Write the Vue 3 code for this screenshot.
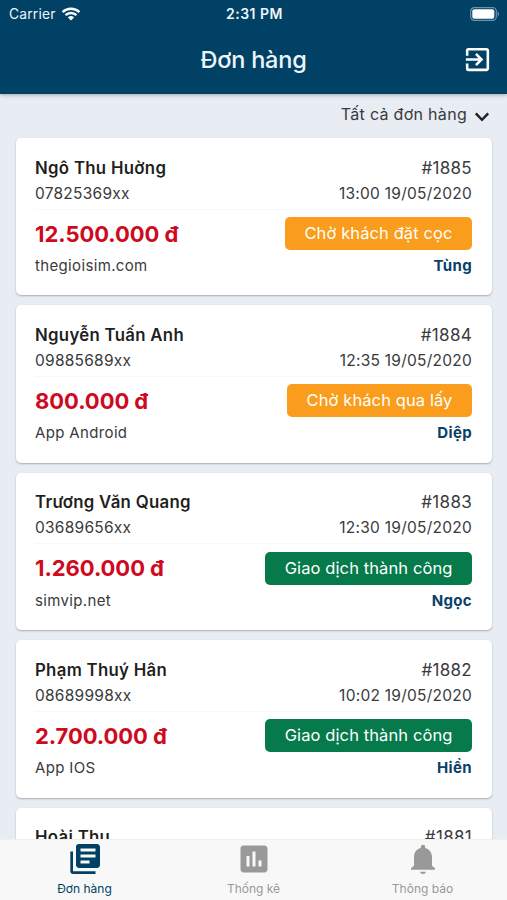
<template>
  <div class="screen">
    <header>
      <div class="status">
        <div class="carrier">
          <span>Carrier</span>
          <svg width="20" height="14" viewBox="0 0 20 14">
            <path d="M1.6 5.2a12 12 0 0 1 16.8 0" />
            <path d="M4.5 8.200a8 8 0 0 1 11 0" />
            <path class="dot" d="M10 13.6 6.900 10.5a4.6 4.6 0 0 1 6.2 0z" />
          </svg>
        </div>
        <span class="time">2:31 PM</span>
        <div class="battery">
          <svg width="30" height="14" viewBox="0 0 30 14">
            <rect class="shell" x="0.7" y="0.7" width="25.6" height="12.6" rx="3.6" />
            <rect class="level" x="2.3" y="2.3" width="22" height="9.4" rx="2" />
            <path class="tip" d="M27.6 4.6c1.8.6 1.8 4.2 0 4.8z" />
          </svg>
        </div>
      </div>
      <div class="title">
        <h1>Đơn hàng</h1>
        <svg class="exit" width="31" height="31" viewBox="0 0 24 24" @click="logout">
          <path
            d="M10.09 15.59 11.5 17l5-5-5-5-1.41 1.41L12.67 11H3v2h9.67l-2.58 2.59zM19 3H5a2 2 0 0 0-2 2v4h2V5h14v14H5v-4H3v4a2 2 0 0 0 2 2h14c1.1 0 2-.9 2-2V5c0-1.1-.9-2-2-2z"
          />
        </svg>
      </div>
    </header>

    <main>
      <div class="filter">
        <span>Tất cả đơn hàng</span>
        <svg width="16" height="12" viewBox="0 0 16 12">
          <path d="M1.8 2.4 8 8.8l6.2-6.4" />
        </svg>
      </div>

      <div class="card" v-for="order in orders" :key="order.id">
        <div class="row first">
          <b class="name">{{ order.name }}</b>
          <span class="id">#{{ order.id }}</span>
        </div>
        <template v-if="order.phone">
          <div class="row second">
            <span class="phone">{{ order.phone }}</span>
            <span class="date">{{ order.date }}</span>
          </div>
          <div class="row third">
            <b class="price">{{ order.price }} đ</b>
            <span class="badge" :class="order.type">{{ order.status }}</span>
          </div>
          <div class="row fourth">
            <span class="source">{{ order.source }}</span>
            <b class="staff">{{ order.staff }}</b>
          </div>
        </template>
      </div>
    </main>

    <nav>
      <a
        v-for="tab in tabs"
        :key="tab.label"
        :class="{ active: current === tab.label }"
        @click="current = tab.label"
      >
        <svg width="36" height="36" viewBox="0 0 24 24"><path :d="tab.icon" /></svg>
        <span>{{ tab.label }}</span>
      </a>
    </nav>
  </div>
</template>

<script setup>
import { ref } from "vue";

const current = ref("Đơn hàng");

const orders = ref([
  {
    id: 1885,
    name: "Ngô Thu Huờng",
    phone: "07825369xx",
    date: "13:00 19/05/2020",
    price: "12.500.000",
    status: "Chờ khách đặt cọc",
    type: "waiting",
    source: "thegioisim.com",
    staff: "Tùng",
  },
  {
    id: 1884,
    name: "Nguyễn Tuấn Anh",
    phone: "09885689xx",
    date: "12:35 19/05/2020",
    price: "800.000",
    status: "Chờ khách qua lấy",
    type: "waiting",
    source: "App Android",
    staff: "Diệp",
  },
  {
    id: 1883,
    name: "Trương Văn Quang",
    phone: "03689656xx",
    date: "12:30 19/05/2020",
    price: "1.260.000",
    status: "Giao dịch thành công",
    type: "success",
    source: "simvip.net",
    staff: "Ngọc",
  },
  {
    id: 1882,
    name: "Phạm Thuý Hân",
    phone: "08689998xx",
    date: "10:02 19/05/2020",
    price: "2.700.000",
    status: "Giao dịch thành công",
    type: "success",
    source: "App IOS",
    staff: "Hiền",
  },
  { id: 1881, name: "Hoài Thu" },
]);

const tabs = [
  {
    label: "Đơn hàng",
    icon: "M4 7H2.200v13.2c0 1.100.8 1.8 1.8 1.8h15v-1.800H4zM20 2H8a2 2 0 0 0-2 2v12c0 1.100.9 2 2 2h12c1.100 0 2-.9 2-2V4c0-1.100-.9-2-2-2zm-1 9H9V9h10v2zm-4 4H9v-2h6v2zm4-8H9V5h10v2z",
  },
  {
    label: "Thống kê",
    icon: "M19 3H5a2 2 0 0 0-2 2v14c0 1.100.9 2 2 2h14c1.100 0 2-.9 2-2V5c0-1.100-.9-2-2-2zM9 17H7v-7h2v7zm4 0h-2V7h2v10zm4 0h-2v-4h2v4z",
  },
  {
    label: "Thông báo",
    icon: "M12 22c1.100 0 2-.7 2-1.500h-4c0 .8.9 1.500 2 1.500zm6-5.500V11c0-3.300-1.700-5.600-4.500-6.300V4a1.500 1.500 0 0 0-3 0v.7C7.600 5.400 6 7.700 6 11v5.500l-2 1.700v.9h16v-.9z",
  },
];

function logout() {
  orders.value = [];
}
</script>

<style>
body {
  margin: 0;
  background: #e8edf4;
}
</style>

<style scoped>
* {
  box-sizing: border-box;
}

.screen {
  height: 900px;
  display: flex;
  flex-direction: column;
  overflow: hidden;
  font-family: Inter, "Noto Sans", sans-serif;
  color: #3a3a3c;
}

header {
  height: 94px;
  flex: none;
  background: #004165;
  color: #eef5fa;
  box-shadow: 0 1px 4px rgba(0, 0, 0, 0.3);
  z-index: 1;
}

.status {
  height: 27px;
  padding: 0 7px 0 9px;
  display: grid;
  grid-template-columns: 1fr auto 1fr;
  align-items: center;
  font-size: 14px;
}

.carrier {
  display: flex;
  align-items: center;
  gap: 5px;
  font-size: 13.8px;
  letter-spacing: 0.2px;
}

.carrier path {
  fill: none;
  stroke: #fff;
  stroke-width: 2.4;
}

.carrier .dot {
  fill: #fff;
  stroke: none;
}

.time {
  font-weight: 600;
  letter-spacing: 0.5px;
}

.battery {
  display: flex;
  justify-content: flex-end;
}

.shell {
  fill: none;
  stroke: #6f93aa;
  stroke-width: 1.2;
}

.level {
  fill: #fff;
}

.tip {
  fill: #6f93aa;
}

.title {
  height: 65px;
  padding: 0 14px;
  display: grid;
  grid-template-columns: 1fr auto 1fr;
  align-items: center;
}

h1 {
  grid-column: 2;
  margin: 0;
  font-size: 23.5px;
  font-weight: 500;
  letter-spacing: -0.2px;
}

.exit {
  justify-self: end;
  fill: #fff;
}

main {
  flex: 1;
  min-height: 0;
  padding: 0 15px 0 16px;
  overflow: hidden;
}

.filter {
  height: 44px;
  padding: 0 2px 4px 0;
  display: flex;
  align-items: center;
  justify-content: flex-end;
  gap: 7px;
  font-size: 16px;
  letter-spacing: 0.3px;
}

.filter svg {
  margin-top: 6px;
  fill: none;
  stroke: #1f2328;
  stroke-width: 2.5;
}

.card {
  height: 157.4px;
  margin-bottom: 10px;
  padding: 16.5px 20px 0 19px;
  background: #fff;
  border-radius: 5px;
  box-shadow: 0 1px 2px rgba(0, 0, 0, 0.28);
}

.row {
  display: flex;
  align-items: center;
  justify-content: space-between;
  height: 26px;
  white-space: nowrap;
}

.name {
  font-size: 16.8px;
  font-weight: 600;
  color: #1f1f21;
  letter-spacing: 0.3px;
}

.id {
  font-size: 17px;
  letter-spacing: 0.3px;
}

.second {
  height: 29px;
  padding-bottom: 3px;
  border-bottom: 1px solid #f8f8f9;
  font-size: 15.5px;
  letter-spacing: 0.25px;
}

.third {
  height: 33px;
  margin-top: 7.5px;
}

.price {
  font-size: 22px;
  font-weight: 700;
  color: #cf0a20;
  letter-spacing: -0.05px;
}

.badge {
  height: 33px;
  padding: 0 19.5px;
  border-radius: 5px;
  font-size: 16.5px;
  line-height: 32px;
  letter-spacing: 0.1px;
  color: #fff;
}

.waiting {
  background: #fa9d1c;
}

.success {
  background: #067a4b;
}

.fourth {
  height: 31px;
  font-size: 15px;
  letter-spacing: 0.35px;
}

.staff {
  font-weight: 700;
  color: #0a4169;
}

nav {
  height: 61px;
  flex: none;
  display: flex;
  background: #f8f8f8;
  border-top: 1px solid #efefef;
}

nav a {
  flex: 1;
  display: flex;
  flex-direction: column;
  align-items: center;
  padding-top: 1px;
  font-size: 12px;
  color: #999;
  cursor: pointer;
}

nav svg {
  fill: currentColor;
}

nav span {
  margin-top: 4px;
}

nav .active {
  color: #004165;
}
</style>
